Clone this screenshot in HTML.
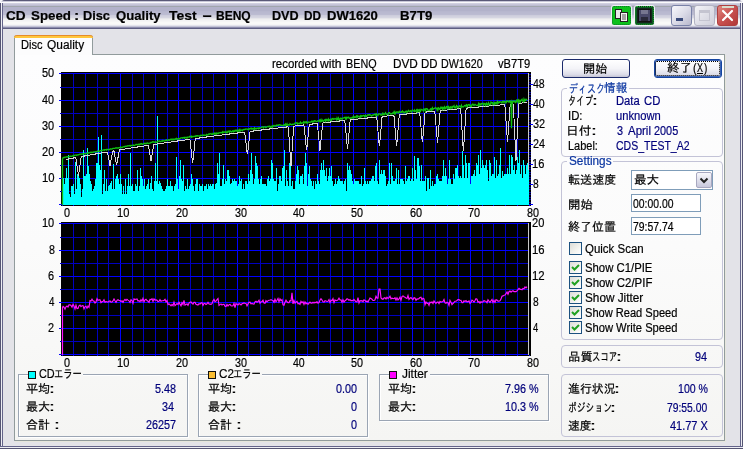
<!DOCTYPE html>
<html lang="ja">
<head>
<meta charset="utf-8">
<title>CD Speed : Disc Quality Test</title>
<style>
html,body{margin:0;padding:0;}
body{width:743px;height:449px;position:relative;overflow:hidden;background:#f4f4f8;
 font-family:"Liberation Sans","IPAGothic","Noto Sans CJK JP",sans-serif;font-size:11px;color:#000;}
.abs,.abs *{position:absolute;}
div{position:absolute;white-space:nowrap;box-sizing:border-box;}
#tx{left:0;top:0;width:743px;height:449px;will-change:transform;-webkit-text-stroke:0.2px;}
.t{line-height:14px;height:14px;font-size:11px;}
.j{font-size:12px;}
.nv{color:#00007b;}
.r{text-align:right;}
#titlebar{left:0;top:0;width:743px;height:29px;border-radius:5px 5px 0 0;background:linear-gradient(to bottom,#5a5a78 0px,#5a5a78 1px,#c8c8d8 1px,#c8c8d8 2px,#fafafc 2px,#fafafc 3px,#d0d0e0 3px,#d0d0e0 4px,#c6c6d8 4px,#c6c6d8 5px,#bcbcd2 5px,#bcbcd2 6px,#a0a6ac 6px,#a0a6ac 7px,#b2b2ca 7px,#b2b2ca 8px,#b2b2ca 8px,#b2b2ca 9px,#b2b2ca 9px,#b2b2ca 10px,#b2b2ca 10px,#b2b2ca 11px,#b7b7ce 11px,#b7b7ce 12px,#b9b9d0 12px,#b9b9d0 13px,#babad0 13px,#babad0 14px,#bcbcd2 14px,#bcbcd2 15px,#cdcddc 15px,#cdcddc 16px,#d2d2df 16px,#d2d2df 17px,#d6d6e2 17px,#d6d6e2 18px,#e6e6ea 18px,#e6e6ea 19px,#f0f0f1 19px,#f0f0f1 20px,#f3f3f3 20px,#f3f3f3 21px,#f6f6f5 21px,#f6f6f5 22px,#fafaf8 22px,#fafaf8 23px,#fafaf8 23px,#fafaf8 24px,#f6f6f6 24px,#f6f6f6 25px,#e4e4ec 25px,#e4e4ec 26px,#c4c4d6 26px,#c4c4d6 27px,#8c8cac 27px,#8c8cac 28px,#5f5f82 28px,#5f5f82 29px);}
#title{left:7px;top:7px;font-weight:bold;font-size:12px;line-height:16px;letter-spacing:1.4px;color:#000;}
.frameL{left:0;top:3px;width:3px;height:446px;background:linear-gradient(to right,#555573 0,#555573 1px,#eeeef4 1px,#eeeef4 2px,#64648a 2px,#64648a 3px);}
.frameR{left:740px;top:3px;width:3px;height:446px;background:linear-gradient(to right,#64648a 0,#64648a 1px,#eeeef4 1px,#eeeef4 2px,#555573 2px,#555573 3px);}
.frameB{left:0;top:446px;width:743px;height:3px;background:linear-gradient(to bottom,#64648a 0,#64648a 1px,#eeeef4 1px,#eeeef4 2px,#555573 2px,#555573 3px);}
#pane{left:14px;top:54px;width:711px;height:387px;box-shadow:1px 1px 0 #e6e6dc;background:linear-gradient(to bottom,#fdfdfe 0,#fbfbfb 50%,#f5f5f3 100%);border:1px solid #919b9c;}
#tab{left:14px;top:35px;width:79px;height:20px;background:#fcfcfd;border:1px solid #919b9c;border-bottom:none;border-top:none;border-radius:3px 3px 0 0;}
#tab .or{left:-1px;top:0;width:79px;height:3px;background:#ffc73c;border-radius:3px 3px 0 0;border-top:1px solid #e68b2c;}
.gb{border:1px solid #c3c3d7;border-radius:4px;}
.gt{background:#f7f7f6;}
.gbe{border:1px solid #9ba5b4;box-shadow:1px 1px 0 #fff, inset 1px 1px 0 #fff;}
.btn{border:1px solid #1b2a6b;border-radius:3px;background:linear-gradient(to bottom,#ffffff 0,#f4f4f8 50%,#dcdce8 85%,#c4c4d4 100%);text-align:center;font-size:12px;line-height:17px;height:19px;}
.edit{border:1px solid #7f9db9;background:#fff;font-size:11px;line-height:15px;padding-left:2px;}
.cb{width:13px;height:13px;border:1px solid #1c5180;background:linear-gradient(135deg,#dcdcd7 0,#f3f3ef 60%,#ffffff 100%);}
.sq{width:8px;height:8px;border:1px solid #111;}
</style>
</head>
<body>
<div style="left:0;top:8px;width:743px;height:441px;background:#e3e3e8;"></div>
<div id="titlebar"></div>
<div class="frameL"></div><div class="frameR"></div><div class="frameB"></div>
<div style="left:611px;top:5px;width:21px;height:21px;background:#f0f0f6;border-radius:3px;"></div>
<div style="left:612px;top:6px;width:19px;height:19px;background:#0cc01c;border:1px dotted #0a7a2a;border-radius:2px;"></div>
<svg style="position:absolute;left:612px;top:6px" width="19" height="19" viewBox="0 0 19 19"><rect x="3.5" y="3.5" width="6" height="9" fill="#e8e8e8" stroke="#222" stroke-width="1"/><rect x="8.5" y="6.5" width="7" height="9" fill="#f4f4f4" stroke="#222" stroke-width="1"/><path d="M10 9h4M10 11h4M10 13h4" stroke="#555" stroke-width="1"/></svg>
<div style="left:634px;top:5px;width:21px;height:21px;background:#f0f0f6;border-radius:3px;"></div>
<div style="left:635px;top:6px;width:19px;height:19px;background:#14241e;border:1px dotted #18c830;border-radius:2px;box-shadow:inset 0 0 0 1px #0c5c20;"></div>
<svg style="position:absolute;left:635px;top:6px" width="19" height="19" viewBox="0 0 19 19"><rect x="3.5" y="3.5" width="12" height="12" fill="#4a4a6a" stroke="#111" stroke-width="1"/><rect x="6" y="4" width="7" height="4" fill="#777790"/><rect x="6" y="11" width="7" height="4" fill="#2a2a3a"/></svg>
<div style="left:671px;top:5px;width:21px;height:21px;border:1px solid #7a82a8;border-radius:3px;background:linear-gradient(135deg,#f8f8fc 0,#dcdce8 50%,#b8b8cc 100%);"></div>
<div style="left:676px;top:18px;width:7px;height:3px;background:#3a4a7a;"></div>
<div style="left:694px;top:5px;width:21px;height:21px;border:1px solid #b4b4c4;border-radius:3px;background:linear-gradient(135deg,#f4f4f8 0,#e0e0e8 50%,#d0d0dc 100%);"></div>
<div style="left:699px;top:10px;width:11px;height:11px;border:1px solid #c4c4d0;border-top:3px solid #c4c4d0;"></div>
<div style="left:717px;top:5px;width:21px;height:21px;border:1px solid #b04040;border-radius:3px;background:linear-gradient(135deg,#e08a80 0,#c85050 50%,#b03838 100%);"></div>
<svg style="position:absolute;left:717px;top:5px" width="21" height="21" viewBox="0 0 21 21"><path d="M6 6L15 15M15 6L6 15" stroke="#fff" stroke-width="2.2" stroke-linecap="round"/></svg>
<div style="left:722px;top:6px;width:12px;height:2px;background:#d8dccc;"></div>

<div id="pane"></div>
<div id="tab"><div class="or"></div></div>
<svg width="743" height="449" viewBox="0 0 743 449" style="position:absolute;left:0;top:0">
<rect x="61" y="72" width="470" height="134" fill="#000"/>
<rect x="73" y="73" width="1" height="132" fill="#0000c0"/>
<rect x="85" y="73" width="1" height="132" fill="#0000c0"/>
<rect x="97" y="73" width="1" height="132" fill="#0000c0"/>
<rect x="108" y="73" width="1" height="132" fill="#0000c0"/>
<rect x="120" y="73" width="1" height="132" fill="#0000ff"/>
<rect x="132" y="73" width="1" height="132" fill="#0000c0"/>
<rect x="143" y="73" width="1" height="132" fill="#0000c0"/>
<rect x="155" y="73" width="1" height="132" fill="#0000c0"/>
<rect x="167" y="73" width="1" height="132" fill="#0000c0"/>
<rect x="178" y="73" width="1" height="132" fill="#0000ff"/>
<rect x="190" y="73" width="1" height="132" fill="#0000c0"/>
<rect x="202" y="73" width="1" height="132" fill="#0000c0"/>
<rect x="213" y="73" width="1" height="132" fill="#0000c0"/>
<rect x="225" y="73" width="1" height="132" fill="#0000c0"/>
<rect x="237" y="73" width="1" height="132" fill="#0000ff"/>
<rect x="248" y="73" width="1" height="132" fill="#0000c0"/>
<rect x="260" y="73" width="1" height="132" fill="#0000c0"/>
<rect x="272" y="73" width="1" height="132" fill="#0000c0"/>
<rect x="283" y="73" width="1" height="132" fill="#0000c0"/>
<rect x="295" y="73" width="1" height="132" fill="#0000ff"/>
<rect x="307" y="73" width="1" height="132" fill="#0000c0"/>
<rect x="318" y="73" width="1" height="132" fill="#0000c0"/>
<rect x="330" y="73" width="1" height="132" fill="#0000c0"/>
<rect x="342" y="73" width="1" height="132" fill="#0000c0"/>
<rect x="353" y="73" width="1" height="132" fill="#0000ff"/>
<rect x="365" y="73" width="1" height="132" fill="#0000c0"/>
<rect x="377" y="73" width="1" height="132" fill="#0000c0"/>
<rect x="388" y="73" width="1" height="132" fill="#0000c0"/>
<rect x="400" y="73" width="1" height="132" fill="#0000c0"/>
<rect x="412" y="73" width="1" height="132" fill="#0000ff"/>
<rect x="423" y="73" width="1" height="132" fill="#0000c0"/>
<rect x="435" y="73" width="1" height="132" fill="#0000c0"/>
<rect x="447" y="73" width="1" height="132" fill="#0000c0"/>
<rect x="458" y="73" width="1" height="132" fill="#0000c0"/>
<rect x="470" y="73" width="1" height="132" fill="#0000ff"/>
<rect x="482" y="73" width="1" height="132" fill="#0000c0"/>
<rect x="493" y="73" width="1" height="132" fill="#0000c0"/>
<rect x="505" y="73" width="1" height="132" fill="#0000c0"/>
<rect x="517" y="73" width="1" height="132" fill="#0000c0"/>
<rect x="59" y="204" width="469" height="1" fill="#0000ff"/>
<rect x="60" y="191" width="468" height="1" fill="#0000c0"/>
<rect x="59" y="178" width="469" height="1" fill="#0000ff"/>
<rect x="60" y="165" width="468" height="1" fill="#0000c0"/>
<rect x="59" y="152" width="469" height="1" fill="#0000ff"/>
<rect x="60" y="139" width="468" height="1" fill="#0000c0"/>
<rect x="59" y="126" width="469" height="1" fill="#0000ff"/>
<rect x="60" y="113" width="468" height="1" fill="#0000c0"/>
<rect x="59" y="100" width="469" height="1" fill="#0000ff"/>
<rect x="60" y="87" width="468" height="1" fill="#0000c0"/>
<rect x="59" y="73" width="469" height="1" fill="#0000ff"/>
<rect x="528" y="73" width="1" height="132" fill="#c8c8c8"/>
<path fill="#00ffff" shape-rendering="crispEdges" d="M62 205V184h1V178h1V184h1V178h1V168h1V178h1V155h1V194h1V197h1V186h1V186h1V184h1V194h1V162h1V189h1V174h1V176h1V178h1V184h1V197h1V189h1V150h1V176h1V176h1V174h1V148h1V166h1V174h1V181h1V184h1V191h1V189h1V186h1V179h1V163h1V163h1V137h1V165h1V170h1V135h1V194h1V184h1V170h1V191h1V179h1V191h1V186h1V185h1V183h1V181h1V189h1V164h1V189h1V179h1V176h1V174h1V179h1V184h1V174h1V184h1V194h1V186h1V194h1V179h1V194h1V186h1V174h1V186h1V153h1V186h1V184h1V191h1V191h1V184h1V186h1V170h1V191h1V186h1V168h1V176h1V179h1V186h1V179h1V189h1V186h1V184h1V179h1V189h1V183h1V176h1V189h1V191h1V181h1V163h1V181h1V116h1V184h1V181h1V183h1V186h1V189h1V191h1V191h1V189h1V186h1V179h1V186h1V186h1V181h1V186h1V186h1V191h1V186h1V184h1V157h1V179h1V189h1V176h1V160h1V179h1V181h1V165h1V191h1V186h1V189h1V179h1V189h1V186h1V184h1V174h1V179h1V186h1V191h1V184h1V179h1V179h1V191h1V184h1V186h1V186h1V184h1V191h1V186h1V186h1V184h1V189h1V184h1V186h1V184h1V186h1V184h1V184h1V189h1V184h1V183h1V163h1V174h1V153h1V186h1V186h1V179h1V165h1V184h1V179h1V181h1V170h1V170h1V176h1V184h1V183h1V179h1V181h1V179h1V181h1V181h1V186h1V184h1V176h1V181h1V179h1V189h1V184h1V189h1V181h1V181h1V184h1V174h1V181h1V170h1V153h1V174h1V184h1V179h1V156h1V163h1V166h1V179h1V184h1V179h1V176h1V184h1V184h1V184h1V184h1V186h1V179h1V176h1V181h1V179h1V160h1V163h1V179h1V181h1V181h1V168h1V191h1V184h1V176h1V176h1V181h1V168h1V166h1V150h1V186h1V170h1V181h1V186h1V163h1V163h1V186h1V181h1V189h1V189h1V181h1V174h1V166h1V170h1V184h1V176h1V176h1V174h1V184h1V166h1V153h1V163h1V186h1V174h1V166h1V179h1V181h1V186h1V181h1V189h1V181h1V184h1V174h1V181h1V184h1V170h1V163h1V170h1V160h1V170h1V176h1V168h1V181h1V176h1V168h1V176h1V166h1V181h1V186h1V184h1V179h1V184h1V181h1V176h1V179h1V181h1V181h1V181h1V184h1V181h1V179h1V191h1V163h1V170h1V166h1V170h1V174h1V181h1V184h1V179h1V181h1V181h1V181h1V181h1V184h1V184h1V176h1V186h1V184h1V168h1V181h1V184h1V181h1V184h1V181h1V181h1V179h1V176h1V176h1V181h1V166h1V163h1V181h1V184h1V160h1V174h1V170h1V174h1V170h1V170h1V176h1V186h1V184h1V181h1V163h1V184h1V163h1V176h1V181h1V181h1V179h1V168h1V184h1V170h1V184h1V179h1V179h1V179h1V181h1V184h1V166h1V181h1V179h1V176h1V176h1V181h1V179h1V168h1V181h1V156h1V170h1V179h1V158h1V158h1V166h1V181h1V165h1V181h1V181h1V181h1V176h1V191h1V178h1V178h1V189h1V170h1V186h1V181h1V186h1V184h1V184h1V176h1V174h1V179h1V181h1V181h1V181h1V176h1V160h1V176h1V168h1V176h1V184h1V179h1V160h1V179h1V184h1V184h1V174h1V179h1V168h1V168h1V165h1V176h1V178h1V176h1V178h1V151h1V165h1V178h1V155h1V163h1V178h1V163h1V163h1V184h1V176h1V176h1V174h1V170h1V176h1V163h1V165h1V155h1V174h1V150h1V168h1V160h1V165h1V168h1V165h1V160h1V170h1V181h1V160h1V163h1V176h1V174h1V174h1V157h1V178h1V160h1V176h1V174h1V165h1V148h1V178h1V171h1V176h1V174h1V174h1V174h1V168h1V174h1V155h1V174h1V155h1V157h1V170h1V165h1V174h1V170h1V157h1V163h1V150h1V174h1V165h1V178h1V160h1V165h1V174h1V165h1V163h1V170h1V205z"/>
<polyline shape-rendering="crispEdges" fill="none" stroke="#d8d8d8" stroke-width="1" points="66.0,159.5 66.5,159.4 67.0,159.3 67.5,159.2 68.0,159.1 68.5,159.0 69.0,158.9 69.5,158.8 70.0,158.7 70.5,158.6 71.0,158.5 71.5,158.4 72.0,158.3 72.5,158.2 73.0,158.1 73.5,158.0 74.0,157.9 74.5,157.8 75.0,157.7 75.5,157.7 76.0,158.9 76.5,162.2 77.0,165.5 77.5,168.9 78.0,172.3 78.5,175.7 79.0,172.2 79.5,168.7 80.0,165.2 80.5,161.6 81.0,158.0 81.5,156.5 82.0,156.4 82.5,156.3 83.0,156.2 83.5,156.2 84.0,156.1 84.5,156.0 85.0,155.9 85.5,155.8 86.0,155.7 86.5,155.6 87.0,155.5 87.5,155.4 88.0,155.3 88.5,155.2 89.0,155.1 89.5,155.1 90.0,155.0 90.5,154.9 91.0,154.8 91.5,154.7 92.0,154.6 92.5,154.5 93.0,154.4 93.5,154.3 94.0,154.2 94.5,154.2 95.0,154.1 95.5,154.0 96.0,153.9 96.5,153.8 97.0,153.7 97.5,153.6 98.0,153.5 98.5,153.4 99.0,153.4 99.5,153.3 100.0,153.2 100.5,153.1 101.0,153.0 101.5,152.9 102.0,152.8 102.5,152.8 103.0,152.7 103.5,152.6 104.0,152.5 104.5,152.4 105.0,152.3 105.5,152.2 106.0,152.1 106.5,152.1 107.0,152.0 107.5,152.9 108.0,155.4 108.5,157.9 109.0,160.4 109.5,163.0 110.0,165.6 110.5,163.0 111.0,160.3 111.5,157.6 112.0,154.9 112.5,152.1 113.0,151.0 113.5,150.9 114.0,151.3 114.5,154.0 115.0,156.7 115.5,159.5 116.0,162.2 116.5,165.0 117.0,163.3 117.5,160.5 118.0,157.6 118.5,154.7 119.0,151.7 119.5,149.9 120.0,149.8 120.5,149.7 121.0,149.6 121.5,149.6 122.0,149.5 122.5,149.4 123.0,149.3 123.5,149.2 124.0,149.1 124.5,149.1 125.0,149.0 125.5,148.9 126.0,148.8 126.5,148.7 127.0,148.7 127.5,148.6 128.0,148.5 128.5,148.4 129.0,148.3 129.5,148.3 130.0,148.2 130.5,148.1 131.0,148.0 131.5,147.9 132.0,147.9 132.5,147.8 133.0,147.7 133.5,147.6 134.0,147.5 134.5,147.5 135.0,147.4 135.5,147.3 136.0,147.2 136.5,147.1 137.0,147.1 137.5,147.0 138.0,146.9 138.5,146.8 139.0,146.8 139.5,146.7 140.0,146.6 140.5,146.5 141.0,146.4 141.5,146.4 142.0,146.3 142.5,146.2 143.0,146.1 143.5,146.1 144.0,146.0 144.5,145.9 145.0,145.8 145.5,145.7 146.0,145.7 146.5,145.6 147.0,145.5 147.5,145.4 148.0,145.4 148.5,146.5 149.0,149.4 149.5,152.3 150.0,155.2 150.5,158.2 151.0,161.2 151.5,158.2 152.0,155.1 152.5,152.0 153.0,148.9 153.5,145.8 154.0,144.5 154.5,144.4 155.0,144.3 155.5,144.2 156.0,144.2 156.5,144.1 157.0,144.0 157.5,143.9 158.0,143.9 158.5,143.8 159.0,143.7 159.5,143.6 160.0,143.6 160.5,143.5 161.0,143.4 161.5,143.3 162.0,143.3 162.5,143.2 163.0,143.1 163.5,143.0 164.0,143.0 164.5,142.9 165.0,142.8 165.5,142.8 166.0,142.7 166.5,142.6 167.0,142.5 167.5,142.5 168.0,142.4 168.5,142.3 169.0,142.2 169.5,142.2 170.0,142.1 170.5,142.0 171.0,142.0 171.5,141.9 172.0,141.8 172.5,141.7 173.0,141.7 173.5,141.6 174.0,141.5 174.5,141.4 175.0,141.4 175.5,141.3 176.0,141.2 176.5,141.2 177.0,141.1 177.5,141.0 178.0,140.9 178.5,140.9 179.0,140.8 179.5,140.7 180.0,140.7 180.5,140.6 181.0,140.5 181.5,140.5 182.0,140.4 182.5,140.3 183.0,140.2 183.5,140.2 184.0,140.1 184.5,140.0 185.0,140.0 185.5,139.9 186.0,139.8 186.5,139.8 187.0,139.7 187.5,139.6 188.0,139.5 188.5,139.5 189.0,139.4 189.5,139.3 190.0,140.2 190.5,144.7 191.0,149.2 191.5,153.7 192.0,158.3 192.5,162.9 193.0,160.1 193.5,155.5 194.0,150.8 194.5,146.1 195.0,141.4 195.5,138.5 196.0,138.4 196.5,138.4 197.0,138.3 197.5,138.2 198.0,138.2 198.5,138.1 199.0,138.0 199.5,138.0 200.0,137.9 200.5,137.8 201.0,137.8 201.5,137.7 202.0,137.6 202.5,137.5 203.0,137.5 203.5,137.4 204.0,137.3 204.5,137.3 205.0,137.2 205.5,137.1 206.0,137.1 206.5,137.0 207.0,136.9 207.5,136.9 208.0,136.8 208.5,136.7 209.0,136.7 209.5,136.6 210.0,136.5 210.5,136.5 211.0,136.4 211.5,136.3 212.0,136.3 212.5,136.2 213.0,136.1 213.5,136.1 214.0,136.0 214.5,135.9 215.0,135.9 215.5,135.8 216.0,135.7 216.5,135.7 217.0,135.6 217.5,135.5 218.0,135.5 218.5,135.4 219.0,135.4 219.5,135.3 220.0,135.2 220.5,135.2 221.0,135.1 221.5,135.0 222.0,135.0 222.5,134.9 223.0,134.8 223.5,134.8 224.0,134.7 224.5,134.6 225.0,134.6 225.5,134.5 226.0,134.4 226.5,134.4 227.0,134.3 227.5,134.2 228.0,134.2 228.5,134.1 229.0,134.1 229.5,134.0 230.0,133.9 230.5,133.9 231.0,133.8 231.5,133.7 232.0,133.7 232.5,133.6 233.0,133.5 233.5,133.5 234.0,133.4 234.5,133.3 235.0,133.3 235.5,133.2 236.0,133.2 236.5,133.1 237.0,133.0 237.5,133.0 238.0,132.9 238.5,132.8 239.0,132.8 239.5,132.7 240.0,132.6 240.5,132.6 241.0,132.5 241.5,132.5 242.0,132.4 242.5,132.3 243.0,132.3 243.5,132.2 244.0,132.1 244.5,132.1 245.0,134.6 245.5,138.8 246.0,143.1 246.5,147.4 247.0,151.7 247.5,154.3 248.0,150.0 248.5,145.6 249.0,141.2 249.5,136.7 250.0,132.3 250.5,131.3 251.0,131.3 251.5,131.2 252.0,131.1 252.5,131.1 253.0,131.0 253.5,131.0 254.0,130.9 254.5,130.8 255.0,130.8 255.5,130.7 256.0,130.7 256.5,130.6 257.0,130.5 257.5,130.5 258.0,130.4 258.5,130.3 259.0,130.3 259.5,130.2 260.0,130.2 260.5,130.1 261.0,130.0 261.5,130.0 262.0,129.9 262.5,129.9 263.0,129.8 263.5,129.7 264.0,129.7 264.5,129.6 265.0,129.6 265.5,129.5 266.0,129.4 266.5,129.4 267.0,129.3 267.5,129.3 268.0,129.2 268.5,129.1 269.0,129.1 269.5,129.0 270.0,128.9 270.5,128.9 271.0,128.8 271.5,128.8 272.0,128.7 272.5,128.6 273.0,128.6 273.5,128.5 274.0,128.5 274.5,128.4 275.0,128.3 275.5,128.3 276.0,128.2 276.5,128.2 277.0,128.1 277.5,128.1 278.0,128.0 278.5,127.9 279.0,127.9 279.5,127.8 280.0,127.8 280.5,127.7 281.0,127.6 281.5,127.6 282.0,127.5 282.5,127.5 283.0,127.4 283.5,127.3 284.0,127.3 284.5,127.2 285.0,127.2 285.5,127.1 286.0,127.0 286.5,127.0 287.0,126.9 287.5,126.9 288.0,126.8 288.5,129.7 289.0,137.0 289.5,144.3 290.0,151.7 290.5,159.0 291.0,166.4 291.5,159.0 292.0,151.6 292.5,144.1 293.0,136.6 293.5,129.2 294.0,126.1 294.5,126.1 295.0,126.0 295.5,125.9 296.0,125.9 296.5,125.8 297.0,125.8 297.5,125.7 298.0,125.6 298.5,125.6 299.0,125.5 299.5,125.5 300.0,125.4 300.5,125.4 301.0,125.3 301.5,125.2 302.0,125.2 302.5,125.1 303.0,125.1 303.5,125.0 304.0,125.9 304.5,130.6 305.0,135.3 305.5,140.0 306.0,144.8 306.5,149.5 307.0,146.7 307.5,141.9 308.0,137.0 308.5,132.2 309.0,127.3 309.5,124.3 310.0,124.3 310.5,124.2 311.0,124.2 311.5,124.1 312.0,124.0 312.5,124.0 313.0,123.9 313.5,123.9 314.0,123.8 314.5,123.8 315.0,123.7 315.5,123.7 316.0,123.6 316.5,123.5 317.0,123.5 317.5,125.4 318.0,130.4 318.5,135.4 319.0,140.4 319.5,145.4 320.0,150.5 320.5,145.4 321.0,140.3 321.5,135.2 322.0,130.1 322.5,124.9 323.0,122.8 323.5,122.8 324.0,122.7 324.5,122.6 325.0,122.6 325.5,122.5 326.0,122.5 326.5,122.4 327.0,122.4 327.5,122.3 328.0,122.3 328.5,122.2 329.0,122.1 329.5,122.1 330.0,122.0 330.5,122.0 331.0,121.9 331.5,121.9 332.0,121.8 332.5,121.8 333.0,121.7 333.5,121.6 334.0,121.6 334.5,121.5 335.0,121.5 335.5,121.4 336.0,121.4 336.5,121.3 337.0,121.3 337.5,121.2 338.0,121.2 338.5,121.1 339.0,121.0 339.5,121.0 340.0,120.9 340.5,120.9 341.0,120.8 341.5,120.8 342.0,120.7 342.5,120.7 343.0,120.6 343.5,120.6 344.0,120.5 344.5,120.4 345.0,122.5 345.5,127.9 346.0,133.2 346.5,138.6 347.0,144.0 347.5,149.4 348.0,144.0 348.5,138.5 349.0,133.0 349.5,127.6 350.0,122.0 350.5,119.8 351.0,119.7 351.5,119.7 352.0,119.6 352.5,119.6 353.0,119.5 353.5,119.5 354.0,119.4 354.5,119.4 355.0,119.3 355.5,119.3 356.0,119.2 356.5,119.2 357.0,119.1 357.5,119.0 358.0,119.0 358.5,118.9 359.0,118.9 359.5,118.8 360.0,118.8 360.5,118.7 361.0,118.7 361.5,118.6 362.0,118.6 362.5,118.5 363.0,118.5 363.5,118.4 364.0,118.4 364.5,118.3 365.0,118.2 365.5,118.2 366.0,118.1 366.5,118.1 367.0,118.0 367.5,118.0 368.0,117.9 368.5,117.9 369.0,117.8 369.5,117.8 370.0,117.7 370.5,117.7 371.0,117.6 371.5,117.6 372.0,117.5 372.5,117.5 373.0,117.4 373.5,117.4 374.0,117.3 374.5,117.2 375.0,117.2 375.5,117.1 376.0,117.1 376.5,117.0 377.0,120.3 377.5,125.8 378.0,131.4 378.5,136.9 379.0,142.5 379.5,145.9 380.0,140.3 380.5,134.6 381.0,129.0 381.5,123.3 382.0,117.6 382.5,116.4 383.0,116.4 383.5,116.3 384.0,116.3 384.5,116.2 385.0,116.2 385.5,116.1 386.0,116.1 386.5,116.0 387.0,116.0 387.5,115.9 388.0,115.8 388.5,115.8 389.0,115.7 389.5,115.7 390.0,115.6 390.5,115.6 391.0,115.5 391.5,115.5 392.0,115.4 392.5,115.4 393.0,115.3 393.5,115.3 394.0,116.4 394.5,122.3 395.0,128.1 395.5,134.0 396.0,139.9 396.5,145.8 397.0,142.2 397.5,136.3 398.0,130.3 398.5,124.3 399.0,118.3 399.5,114.7 400.0,114.6 400.5,114.6 401.0,114.5 401.5,114.5 402.0,114.4 402.5,114.4 403.0,114.3 403.5,114.3 404.0,114.2 404.5,114.2 405.0,114.1 405.5,114.1 406.0,114.0 406.5,114.0 407.0,113.9 407.5,113.9 408.0,113.8 408.5,113.8 409.0,113.7 409.5,113.7 410.0,113.6 410.5,113.6 411.0,113.5 411.5,113.5 412.0,113.4 412.5,113.4 413.0,113.3 413.5,113.3 414.0,113.2 414.5,113.2 415.0,113.1 415.5,113.1 416.0,113.0 416.5,113.0 417.0,112.9 417.5,112.9 418.0,112.8 418.5,112.8 419.0,112.7 419.5,112.7 420.0,116.0 420.5,121.7 421.0,127.4 421.5,133.1 422.0,138.8 422.5,142.3 423.0,136.5 423.5,130.7 424.0,124.9 424.5,119.1 425.0,113.3 425.5,112.1 426.0,112.0 426.5,112.0 427.0,111.9 427.5,111.9 428.0,111.8 428.5,111.8 429.0,111.7 429.5,111.7 430.0,111.6 430.5,111.6 431.0,111.5 431.5,111.5 432.0,111.4 432.5,111.4 433.0,111.3 433.5,111.3 434.0,111.2 434.5,111.2 435.0,113.5 435.5,119.5 436.0,125.4 436.5,131.4 437.0,137.4 437.5,143.4 438.0,137.4 438.5,131.3 439.0,125.3 439.5,119.2 440.0,113.1 440.5,110.6 441.0,110.5 441.5,110.5 442.0,110.4 442.5,110.4 443.0,110.3 443.5,110.3 444.0,110.2 444.5,110.2 445.0,110.2 445.5,110.1 446.0,110.1 446.5,110.0 447.0,110.0 447.5,109.9 448.0,109.9 448.5,109.8 449.0,109.8 449.5,109.7 450.0,109.7 450.5,109.6 451.0,109.6 451.5,109.5 452.0,109.5 452.5,109.4 453.0,109.4 453.5,109.3 454.0,109.3 454.5,109.2 455.0,109.2 455.5,109.1 456.0,109.1 456.5,109.0 457.0,109.0 457.5,108.9 458.0,108.9 458.5,108.9 459.0,108.8 459.5,108.8 460.0,108.7 460.5,108.7 461.0,113.5 461.5,121.6 462.0,129.6 462.5,137.8 463.0,145.9 463.5,150.8 464.0,142.6 464.5,134.4 465.0,126.2 465.5,118.0 466.0,109.8 466.5,108.1 467.0,108.0 467.5,108.0 468.0,107.9 468.5,107.9 469.0,107.9 469.5,107.8 470.0,107.8 470.5,107.7 471.0,107.7 471.5,107.6 472.0,107.6 472.5,107.5 473.0,107.5 473.5,107.4 474.0,107.4 474.5,107.3 475.0,107.3 475.5,107.2 476.0,107.2 476.5,107.1 477.0,107.1 477.5,107.1 478.0,107.0 478.5,107.0 479.0,106.9 479.5,106.9 480.0,106.8 480.5,106.8 481.0,106.7 481.5,106.7 482.0,106.6 482.5,106.6 483.0,106.5 483.5,106.5 484.0,106.4 484.5,106.4 485.0,106.3 485.5,106.3 486.0,106.3 486.5,106.2 487.0,106.2 487.5,106.1 488.0,106.1 488.5,106.0 489.0,106.0 489.5,105.9 490.0,105.9 490.5,105.8 491.0,105.8 491.5,105.7 492.0,105.7 492.5,105.7 493.0,105.6 493.5,105.6 494.0,105.5 494.5,105.5 495.0,105.4 495.5,105.4 496.0,105.3 496.5,105.3 497.0,105.2 497.5,105.2 498.0,105.1 498.5,105.1 499.0,105.1 499.5,105.0 500.0,105.0 500.5,104.9 501.0,104.9 501.5,104.8 502.0,104.8 502.5,104.7 503.0,104.7 503.5,104.6 504.0,104.6 504.5,104.5 505.0,107.3 505.5,114.3 506.0,121.2 506.5,128.2 507.0,135.3 507.5,142.3 508.0,135.2 508.5,128.2 509.0,121.1 509.5,114.0 510.0,106.9 510.5,104.0 511.0,104.0 511.5,103.9 512.0,103.9 512.5,103.8 513.0,103.8 513.5,107.9 514.0,118.4 514.5,129.0 515.0,139.5 515.5,150.0 516.0,160.6 516.5,150.0 517.0,139.4 517.5,128.8 518.0,118.2 518.5,107.5 519.0,103.2 519.5,103.2 520.0,103.1 520.5,103.1 521.0,103.0 521.5,103.0 522.0,103.0 522.5,102.9 523.0,102.9 523.5,102.8 524.0,102.8 524.5,102.7 525.0,102.7 525.5,102.6 526.0,102.6 526.5,102.5 527.0,102.5"/>
<polyline fill="none" stroke="#10c010" stroke-width="1.3" points="62.5,205.0 62.5,159.0 63.0,157.7 63.5,157.5 64.0,157.7 64.5,157.2 65.0,157.4 65.5,157.2 66.0,156.9 66.5,157.1 67.0,156.7 67.5,156.9 68.0,156.5 68.5,156.4 69.0,156.6 69.5,156.7 70.0,156.2 70.5,156.1 71.0,156.3 71.5,156.4 72.0,156.1 72.5,155.9 73.0,156.1 73.5,155.4 74.0,155.9 74.5,155.4 75.0,155.2 75.5,155.1 76.0,155.1 76.5,155.4 77.0,154.9 77.5,155.0 78.0,155.0 78.5,154.7 79.0,154.7 79.5,154.3 80.0,154.2 80.5,154.2 81.0,154.4 81.5,154.2 82.0,154.0 82.5,154.1 83.0,153.9 83.5,153.7 84.0,154.0 84.5,153.8 85.0,153.4 85.5,153.5 86.0,153.4 86.5,153.6 87.0,153.4 87.5,153.0 88.0,153.4 88.5,152.7 89.0,152.8 89.5,152.9 90.0,152.4 90.5,152.6 91.0,152.1 91.5,152.5 92.0,152.5 92.5,152.3 93.0,152.4 93.5,151.9 94.0,152.1 94.5,151.9 95.0,151.8 95.5,151.6 96.0,151.8 96.5,151.8 97.0,151.4 97.5,151.5 98.0,150.9 98.5,151.3 99.0,151.2 99.5,151.4 100.0,151.1 100.5,150.6 101.0,150.6 101.5,150.8 102.0,150.2 102.5,150.4 103.0,150.1 103.5,150.0 104.0,149.8 104.5,150.3 105.0,149.7 105.5,149.7 106.0,149.8 106.5,150.1 107.0,149.3 107.5,149.5 108.0,149.5 108.5,149.7 109.0,149.6 109.5,149.6 110.0,149.0 110.5,149.0 111.0,148.9 111.5,149.2 112.0,149.2 112.5,148.5 113.0,148.4 113.5,148.4 114.0,148.3 114.5,148.4 115.0,148.4 115.5,148.0 116.0,147.7 116.5,148.0 117.0,147.9 117.5,148.0 118.0,148.2 118.5,147.9 119.0,147.7 119.5,147.7 120.0,147.7 120.5,147.0 121.0,147.7 121.5,147.5 122.0,147.5 122.5,147.4 123.0,146.9 123.5,146.8 124.0,146.5 124.5,146.9 125.0,146.3 125.5,146.2 126.0,146.3 126.5,146.1 127.0,146.2 127.5,145.9 128.0,145.7 128.5,145.8 129.0,145.7 129.5,145.8 130.0,145.4 130.5,146.1 131.0,145.8 131.5,145.3 132.0,145.3 132.5,145.3 133.0,145.3 133.5,145.0 134.0,145.6 134.5,145.6 135.0,145.1 135.5,145.0 136.0,144.5 136.5,144.5 137.0,144.6 137.5,144.5 138.0,144.9 138.5,144.2 139.0,144.0 139.5,144.8 140.0,144.3 140.5,143.9 141.0,144.2 141.5,143.6 142.0,144.0 142.5,144.4 143.0,144.2 143.5,143.9 144.0,143.4 144.5,143.5 145.0,143.2 145.5,143.7 146.0,143.4 146.5,143.6 147.0,143.0 147.5,142.9 148.0,143.4 148.5,143.5 149.0,143.3 149.5,143.1 150.0,143.1 150.5,142.9 151.0,142.3 151.5,142.6 152.0,142.3 152.5,141.9 153.0,141.8 153.5,142.0 154.0,141.9 154.5,142.3 155.0,142.5 155.5,141.9 156.0,142.3 156.5,142.3 157.0,142.2 157.5,141.5 158.0,141.3 158.5,141.2 159.0,141.1 159.5,141.0 160.0,141.4 160.5,141.6 161.0,141.5 161.5,141.0 162.0,141.1 162.5,141.2 163.0,140.4 163.5,140.9 164.0,141.1 164.5,140.9 165.0,140.8 165.5,140.4 166.0,140.0 166.5,140.6 167.0,140.0 167.5,140.5 168.0,140.6 168.5,139.9 169.0,139.8 169.5,140.4 170.0,140.0 170.5,139.4 171.0,139.2 171.5,139.2 172.0,140.0 172.5,139.8 173.0,139.0 173.5,139.7 174.0,139.8 174.5,139.3 175.0,138.9 175.5,139.1 176.0,138.5 176.5,138.3 177.0,139.3 177.5,138.9 178.0,138.7 178.5,139.1 179.0,138.4 179.5,138.9 180.0,138.7 180.5,138.0 181.0,137.9 181.5,137.9 182.0,137.8 182.5,138.1 183.0,137.7 183.5,137.8 184.0,137.4 184.5,138.2 185.0,137.5 185.5,137.5 186.0,137.6 186.5,137.9 187.0,137.3 187.5,137.8 188.0,137.2 188.5,137.2 189.0,137.1 189.5,136.5 190.0,136.9 190.5,136.5 191.0,136.2 191.5,137.1 192.0,136.3 192.5,136.6 193.0,136.8 193.5,136.5 194.0,136.2 194.5,136.4 195.0,136.3 195.5,136.6 196.0,135.7 196.5,136.1 197.0,135.7 197.5,135.7 198.0,136.2 198.5,135.8 199.0,135.8 199.5,136.0 200.0,136.1 200.5,135.4 201.0,135.6 201.5,135.4 202.0,135.3 202.5,135.5 203.0,135.1 203.5,135.2 204.0,135.0 204.5,135.5 205.0,135.2 205.5,135.3 206.0,135.3 206.5,134.4 207.0,134.7 207.5,135.1 208.0,134.9 208.5,134.0 209.0,133.9 209.5,134.2 210.0,133.7 210.5,133.8 211.0,133.6 211.5,134.3 212.0,134.3 212.5,134.4 213.0,133.4 213.5,134.1 214.0,133.9 214.5,133.2 215.0,134.1 215.5,134.1 216.0,133.1 216.5,134.0 217.0,133.2 217.5,133.2 218.0,133.8 218.5,133.6 219.0,132.6 219.5,132.9 220.0,132.9 220.5,132.6 221.0,132.4 221.5,132.5 222.0,133.0 222.5,131.9 223.0,132.6 223.5,132.4 224.0,131.7 224.5,132.1 225.0,132.4 225.5,132.2 226.0,131.5 226.5,132.7 227.0,132.4 227.5,132.6 228.0,131.3 228.5,131.5 229.0,131.1 229.5,132.1 230.0,131.3 230.5,131.0 231.0,131.4 231.5,132.0 232.0,131.8 232.5,131.0 233.0,130.7 233.5,131.8 234.0,131.2 234.5,131.3 235.0,130.4 235.5,130.3 236.0,131.1 236.5,130.7 237.0,130.1 237.5,131.3 238.0,130.8 238.5,131.0 239.0,129.9 239.5,130.9 240.0,129.7 240.5,130.8 241.0,130.2 241.5,129.9 242.0,130.2 242.5,130.7 243.0,129.6 243.5,129.4 244.0,129.9 244.5,129.4 245.0,129.1 245.5,129.2 246.0,128.9 246.5,129.1 247.0,129.2 247.5,129.1 248.0,129.7 248.5,129.0 249.0,129.2 249.5,128.7 250.0,128.9 250.5,128.3 251.0,128.6 251.5,128.2 252.0,129.2 252.5,128.9 253.0,128.3 253.5,128.6 254.0,129.3 254.5,127.9 255.0,129.0 255.5,128.3 256.0,128.3 256.5,128.8 257.0,128.1 257.5,128.2 258.0,128.4 258.5,128.8 259.0,127.7 259.5,128.4 260.0,128.2 260.5,128.0 261.0,127.6 261.5,127.4 262.0,126.9 262.5,127.0 263.0,126.8 263.5,127.8 264.0,127.0 264.5,126.8 265.0,126.6 265.5,127.7 266.0,127.7 266.5,127.3 267.0,126.7 267.5,126.5 268.0,126.6 268.5,126.8 269.0,126.2 269.5,126.6 270.0,126.3 270.5,127.3 271.0,127.3 271.5,126.5 272.0,126.0 272.5,127.1 273.0,126.0 273.5,126.0 274.0,125.4 274.5,125.9 275.0,126.0 275.5,126.0 276.0,125.4 276.5,125.9 277.0,125.0 277.5,125.4 278.0,125.0 278.5,125.5 279.0,124.8 279.5,124.7 280.0,125.1 280.5,125.0 281.0,125.5 281.5,125.3 282.0,125.6 282.5,125.4 283.0,125.5 283.5,125.7 284.0,124.8 284.5,124.6 285.0,125.7 285.5,124.2 286.0,125.1 286.5,124.9 287.0,123.9 287.5,125.1 288.0,125.2 288.5,124.7 289.0,124.8 289.5,124.9 290.0,123.7 290.5,124.3 291.0,124.2 291.5,124.7 292.0,124.6 292.5,124.5 293.0,124.1 293.5,124.5 294.0,124.1 294.5,124.1 295.0,123.2 295.5,122.8 296.0,123.0 296.5,123.3 297.0,122.8 297.5,124.0 298.0,123.4 298.5,123.5 299.0,123.5 299.5,123.5 300.0,123.1 300.5,122.2 301.0,123.5 301.5,123.4 302.0,122.9 302.5,122.9 303.0,123.0 303.5,122.0 304.0,123.1 304.5,122.2 305.0,121.8 305.5,122.1 306.0,122.8 306.5,121.9 307.0,122.7 307.5,123.1 308.0,122.2 308.5,121.9 309.0,122.1 309.5,122.4 310.0,122.4 310.5,122.1 311.0,122.1 311.5,121.1 312.0,121.1 312.5,121.3 313.0,122.1 313.5,121.2 314.0,121.6 314.5,120.6 315.0,120.6 315.5,120.9 316.0,121.6 316.5,121.6 317.0,121.5 317.5,120.8 318.0,121.1 318.5,121.0 319.0,120.9 319.5,120.2 320.0,121.6 320.5,120.2 321.0,121.6 321.5,121.5 322.0,119.7 322.5,120.5 323.0,121.1 323.5,121.3 324.0,120.3 324.5,119.9 325.0,119.8 325.5,121.1 326.0,119.6 326.5,120.3 327.0,119.4 327.5,120.1 328.0,120.8 328.5,119.2 329.0,120.4 329.5,119.8 330.0,120.5 330.5,120.1 331.0,119.1 331.5,120.3 332.0,119.5 332.5,118.6 333.0,118.5 333.5,119.3 334.0,119.2 334.5,118.9 335.0,118.5 335.5,118.8 336.0,118.7 336.5,119.7 337.0,118.0 337.5,119.4 338.0,119.5 338.5,118.1 339.0,119.6 339.5,119.1 340.0,119.4 340.5,118.2 341.0,118.3 341.5,118.3 342.0,119.4 342.5,118.5 343.0,118.0 343.5,118.1 344.0,117.8 344.5,117.3 345.0,117.3 345.5,118.7 346.0,117.6 346.5,118.8 347.0,117.4 347.5,117.4 348.0,117.8 348.5,117.1 349.0,117.4 349.5,118.5 350.0,118.3 350.5,118.1 351.0,117.7 351.5,118.2 352.0,118.2 352.5,117.4 353.0,117.7 353.5,116.3 354.0,117.6 354.5,117.0 355.0,117.5 355.5,117.2 356.0,116.5 356.5,116.0 357.0,117.6 357.5,116.0 358.0,116.6 358.5,116.3 359.0,116.2 359.5,117.0 360.0,117.4 360.5,115.9 361.0,116.7 361.5,115.9 362.0,116.4 362.5,116.0 363.0,115.5 363.5,115.4 364.0,115.5 364.5,116.8 365.0,115.9 365.5,115.3 366.0,116.7 366.5,116.8 367.0,115.6 367.5,115.0 368.0,115.0 368.5,114.7 369.0,115.2 369.5,114.6 370.0,114.9 370.5,114.9 371.0,115.5 371.5,116.1 372.0,115.7 372.5,115.0 373.0,114.9 373.5,115.1 374.0,114.7 374.5,114.6 375.0,114.0 375.5,114.4 376.0,115.8 376.5,114.0 377.0,114.7 377.5,114.9 378.0,115.3 378.5,113.9 379.0,114.0 379.5,113.9 380.0,114.2 380.5,114.2 381.0,115.2 381.5,115.0 382.0,115.0 382.5,113.1 383.0,113.1 383.5,114.5 384.0,114.8 384.5,113.9 385.0,114.0 385.5,112.7 386.0,113.5 386.5,114.6 387.0,114.3 387.5,114.4 388.0,114.6 388.5,113.0 389.0,112.6 389.5,112.7 390.0,113.4 390.5,113.7 391.0,114.2 391.5,113.7 392.0,113.5 392.5,113.7 393.0,112.9 393.5,113.1 394.0,111.9 394.5,113.5 395.0,112.2 395.5,113.7 396.0,113.0 396.5,112.2 397.0,111.8 397.5,112.0 398.0,112.8 398.5,112.9 399.0,111.6 399.5,111.4 400.0,112.4 400.5,112.5 401.0,112.0 401.5,111.6 402.0,112.3 402.5,111.0 403.0,111.6 403.5,111.9 404.0,112.9 404.5,112.2 405.0,112.7 405.5,111.7 406.0,111.1 406.5,111.1 407.0,112.6 407.5,112.0 408.0,111.1 408.5,110.4 409.0,111.4 409.5,111.7 410.0,111.1 410.5,110.7 411.0,111.6 411.5,112.1 412.0,110.5 412.5,110.0 413.0,110.6 413.5,110.8 414.0,111.3 414.5,110.2 415.0,111.5 415.5,111.3 416.0,110.7 416.5,110.0 417.0,111.7 417.5,110.1 418.0,111.2 418.5,109.8 419.0,109.8 419.5,111.0 420.0,109.8 420.5,111.3 421.0,110.2 421.5,109.4 422.0,109.5 422.5,109.9 423.0,110.4 423.5,111.0 424.0,109.1 424.5,109.6 425.0,109.1 425.5,110.9 426.0,108.9 426.5,108.6 427.0,108.6 427.5,109.3 428.0,110.4 428.5,110.4 429.0,110.0 429.5,110.5 430.0,110.3 430.5,108.9 431.0,108.5 431.5,110.2 432.0,109.7 432.5,108.0 433.0,109.4 433.5,108.7 434.0,108.6 434.5,108.5 435.0,108.0 435.5,107.6 436.0,108.2 436.5,108.3 437.0,109.7 437.5,107.7 438.0,109.6 438.5,107.8 439.0,108.1 439.5,109.2 440.0,109.1 440.5,108.1 441.0,107.2 441.5,108.1 442.0,107.8 442.5,109.1 443.0,107.3 443.5,107.7 444.0,108.9 444.5,106.8 445.0,107.6 445.5,108.6 446.0,108.4 446.5,106.6 447.0,106.5 447.5,106.6 448.0,108.6 448.5,106.9 449.0,108.1 449.5,108.4 450.0,107.0 450.5,106.8 451.0,108.4 451.5,107.5 452.0,106.6 452.5,107.7 453.0,106.6 453.5,106.5 454.0,105.8 454.5,107.6 455.0,107.9 455.5,107.2 456.0,107.9 456.5,105.6 457.0,106.0 457.5,106.6 458.0,107.7 458.5,107.7 459.0,106.2 459.5,105.8 460.0,106.2 460.5,106.3 461.0,107.4 461.5,105.5 462.0,107.0 462.5,106.8 463.0,106.9 463.5,106.8 464.0,106.3 464.5,105.6 465.0,105.5 465.5,105.5 466.0,106.5 466.5,104.7 467.0,105.0 467.5,106.3 468.0,105.0 468.5,104.5 469.0,104.4 469.5,105.6 470.0,105.0 470.5,106.6 471.0,106.3 471.5,106.6 472.0,104.7 472.5,104.2 473.0,104.2 473.5,105.1 474.0,105.6 474.5,104.9 475.0,104.3 475.5,104.7 476.0,105.2 476.5,105.3 477.0,105.4 477.5,105.6 478.0,105.1 478.5,103.7 479.0,105.5 479.5,104.0 480.0,104.7 480.5,104.1 481.0,105.0 481.5,103.6 482.0,103.7 482.5,103.6 483.0,103.3 483.5,105.2 484.0,104.3 484.5,103.6 485.0,103.8 485.5,105.3 486.0,104.0 486.5,103.2 487.0,104.7 487.5,104.2 488.0,105.0 488.5,102.7 489.0,103.6 489.5,104.5 490.0,104.5 490.5,104.6 491.0,102.3 491.5,102.9 492.0,102.4 492.5,102.5 493.0,104.5 493.5,103.5 494.0,104.3 494.5,102.8 495.0,104.1 495.5,102.9 496.0,102.4 496.5,103.7 497.0,104.1 497.5,101.8 498.0,103.1 498.5,103.1 499.0,102.0 499.5,102.4 500.0,101.7 500.5,101.8 501.0,101.9 501.5,102.8 502.0,102.9 502.5,101.6 503.0,101.1 503.5,101.9 504.0,102.8 504.5,101.4 505.0,101.7 505.5,101.4 506.0,102.9 506.5,102.2 507.0,100.8 507.5,100.9 508.0,101.6 508.5,102.0 509.0,102.2 509.5,100.7 510.0,100.8 510.5,102.2 511.0,101.4 511.5,128.3 512.0,101.0 512.5,102.7 513.0,101.0 513.5,101.6 514.0,101.0 514.5,101.1 515.0,102.3 515.5,102.6 516.0,100.8 516.5,100.3 517.0,101.7 517.5,100.2 518.0,99.7 518.5,102.1 519.0,100.7 519.5,101.8 520.0,100.6 520.5,101.8 521.0,100.6 521.5,99.8 522.0,99.3 522.5,100.8 523.0,101.0 523.5,101.7 524.0,99.3 524.5,100.8 525.0,100.0 525.5,100.4 526.0,99.3 526.5,99.6 527.0,100.3"/>
<rect x="529" y="204" width="4" height="1" fill="#0000ff"/>
<rect x="529" y="202" width="2" height="1" fill="#0000a0"/>
<rect x="529" y="199" width="2" height="1" fill="#0000a0"/>
<rect x="529" y="197" width="2" height="1" fill="#0000a0"/>
<rect x="529" y="194" width="2" height="1" fill="#0000a0"/>
<rect x="529" y="192" width="2" height="1" fill="#0000a0"/>
<rect x="529" y="189" width="2" height="1" fill="#0000a0"/>
<rect x="529" y="187" width="2" height="1" fill="#0000a0"/>
<rect x="529" y="184" width="4" height="1" fill="#0000ff"/>
<rect x="529" y="182" width="2" height="1" fill="#0000a0"/>
<rect x="529" y="179" width="2" height="1" fill="#0000a0"/>
<rect x="529" y="177" width="2" height="1" fill="#0000a0"/>
<rect x="529" y="174" width="2" height="1" fill="#0000a0"/>
<rect x="529" y="172" width="2" height="1" fill="#0000a0"/>
<rect x="529" y="169" width="2" height="1" fill="#0000a0"/>
<rect x="529" y="167" width="2" height="1" fill="#0000a0"/>
<rect x="529" y="164" width="4" height="1" fill="#0000ff"/>
<rect x="529" y="162" width="2" height="1" fill="#0000a0"/>
<rect x="529" y="159" width="2" height="1" fill="#0000a0"/>
<rect x="529" y="157" width="2" height="1" fill="#0000a0"/>
<rect x="529" y="154" width="2" height="1" fill="#0000a0"/>
<rect x="529" y="152" width="2" height="1" fill="#0000a0"/>
<rect x="529" y="149" width="2" height="1" fill="#0000a0"/>
<rect x="529" y="147" width="2" height="1" fill="#0000a0"/>
<rect x="529" y="144" width="4" height="1" fill="#0000ff"/>
<rect x="529" y="142" width="2" height="1" fill="#0000a0"/>
<rect x="529" y="139" width="2" height="1" fill="#0000a0"/>
<rect x="529" y="137" width="2" height="1" fill="#0000a0"/>
<rect x="529" y="134" width="2" height="1" fill="#0000a0"/>
<rect x="529" y="132" width="2" height="1" fill="#0000a0"/>
<rect x="529" y="129" width="2" height="1" fill="#0000a0"/>
<rect x="529" y="127" width="2" height="1" fill="#0000a0"/>
<rect x="529" y="124" width="4" height="1" fill="#0000ff"/>
<rect x="529" y="122" width="2" height="1" fill="#0000a0"/>
<rect x="529" y="119" width="2" height="1" fill="#0000a0"/>
<rect x="529" y="117" width="2" height="1" fill="#0000a0"/>
<rect x="529" y="114" width="2" height="1" fill="#0000a0"/>
<rect x="529" y="112" width="2" height="1" fill="#0000a0"/>
<rect x="529" y="109" width="2" height="1" fill="#0000a0"/>
<rect x="529" y="107" width="2" height="1" fill="#0000a0"/>
<rect x="529" y="104" width="4" height="1" fill="#0000ff"/>
<rect x="529" y="102" width="2" height="1" fill="#0000a0"/>
<rect x="529" y="99" width="2" height="1" fill="#0000a0"/>
<rect x="529" y="97" width="2" height="1" fill="#0000a0"/>
<rect x="529" y="94" width="2" height="1" fill="#0000a0"/>
<rect x="529" y="92" width="2" height="1" fill="#0000a0"/>
<rect x="529" y="89" width="2" height="1" fill="#0000a0"/>
<rect x="529" y="87" width="2" height="1" fill="#0000a0"/>
<rect x="529" y="84" width="4" height="1" fill="#0000ff"/>
<rect x="529" y="82" width="2" height="1" fill="#0000a0"/>
<rect x="529" y="79" width="2" height="1" fill="#0000a0"/>
<rect x="529" y="77" width="2" height="1" fill="#0000a0"/>
<rect x="529" y="74" width="2" height="1" fill="#0000a0"/>
<rect x="62" y="205" width="1" height="1" fill="#0000ff"/>
<rect x="73" y="205" width="1" height="1" fill="#0000ff"/>
<rect x="85" y="205" width="1" height="1" fill="#0000ff"/>
<rect x="97" y="205" width="1" height="1" fill="#0000ff"/>
<rect x="108" y="205" width="1" height="1" fill="#0000ff"/>
<rect x="120" y="205" width="1" height="1" fill="#0000ff"/>
<rect x="132" y="205" width="1" height="1" fill="#0000ff"/>
<rect x="143" y="205" width="1" height="1" fill="#0000ff"/>
<rect x="155" y="205" width="1" height="1" fill="#0000ff"/>
<rect x="167" y="205" width="1" height="1" fill="#0000ff"/>
<rect x="178" y="205" width="1" height="1" fill="#0000ff"/>
<rect x="190" y="205" width="1" height="1" fill="#0000ff"/>
<rect x="202" y="205" width="1" height="1" fill="#0000ff"/>
<rect x="213" y="205" width="1" height="1" fill="#0000ff"/>
<rect x="225" y="205" width="1" height="1" fill="#0000ff"/>
<rect x="237" y="205" width="1" height="1" fill="#0000ff"/>
<rect x="248" y="205" width="1" height="1" fill="#0000ff"/>
<rect x="260" y="205" width="1" height="1" fill="#0000ff"/>
<rect x="272" y="205" width="1" height="1" fill="#0000ff"/>
<rect x="283" y="205" width="1" height="1" fill="#0000ff"/>
<rect x="295" y="205" width="1" height="1" fill="#0000ff"/>
<rect x="307" y="205" width="1" height="1" fill="#0000ff"/>
<rect x="318" y="205" width="1" height="1" fill="#0000ff"/>
<rect x="330" y="205" width="1" height="1" fill="#0000ff"/>
<rect x="342" y="205" width="1" height="1" fill="#0000ff"/>
<rect x="353" y="205" width="1" height="1" fill="#0000ff"/>
<rect x="365" y="205" width="1" height="1" fill="#0000ff"/>
<rect x="377" y="205" width="1" height="1" fill="#0000ff"/>
<rect x="388" y="205" width="1" height="1" fill="#0000ff"/>
<rect x="400" y="205" width="1" height="1" fill="#0000ff"/>
<rect x="412" y="205" width="1" height="1" fill="#0000ff"/>
<rect x="423" y="205" width="1" height="1" fill="#0000ff"/>
<rect x="435" y="205" width="1" height="1" fill="#0000ff"/>
<rect x="447" y="205" width="1" height="1" fill="#0000ff"/>
<rect x="458" y="205" width="1" height="1" fill="#0000ff"/>
<rect x="470" y="205" width="1" height="1" fill="#0000ff"/>
<rect x="482" y="205" width="1" height="1" fill="#0000ff"/>
<rect x="493" y="205" width="1" height="1" fill="#0000ff"/>
<rect x="505" y="205" width="1" height="1" fill="#0000ff"/>
<rect x="517" y="205" width="1" height="1" fill="#0000ff"/>
<rect x="529" y="205" width="1" height="1" fill="#0000ff"/>
<rect x="61" y="222" width="470" height="134" fill="#000"/>
<rect x="73" y="223" width="1" height="132" fill="#0000c0"/>
<rect x="85" y="223" width="1" height="132" fill="#0000c0"/>
<rect x="97" y="223" width="1" height="132" fill="#0000c0"/>
<rect x="108" y="223" width="1" height="132" fill="#0000c0"/>
<rect x="120" y="223" width="1" height="132" fill="#0000ff"/>
<rect x="132" y="223" width="1" height="132" fill="#0000c0"/>
<rect x="143" y="223" width="1" height="132" fill="#0000c0"/>
<rect x="155" y="223" width="1" height="132" fill="#0000c0"/>
<rect x="167" y="223" width="1" height="132" fill="#0000c0"/>
<rect x="178" y="223" width="1" height="132" fill="#0000ff"/>
<rect x="190" y="223" width="1" height="132" fill="#0000c0"/>
<rect x="202" y="223" width="1" height="132" fill="#0000c0"/>
<rect x="213" y="223" width="1" height="132" fill="#0000c0"/>
<rect x="225" y="223" width="1" height="132" fill="#0000c0"/>
<rect x="237" y="223" width="1" height="132" fill="#0000ff"/>
<rect x="248" y="223" width="1" height="132" fill="#0000c0"/>
<rect x="260" y="223" width="1" height="132" fill="#0000c0"/>
<rect x="272" y="223" width="1" height="132" fill="#0000c0"/>
<rect x="283" y="223" width="1" height="132" fill="#0000c0"/>
<rect x="295" y="223" width="1" height="132" fill="#0000ff"/>
<rect x="307" y="223" width="1" height="132" fill="#0000c0"/>
<rect x="318" y="223" width="1" height="132" fill="#0000c0"/>
<rect x="330" y="223" width="1" height="132" fill="#0000c0"/>
<rect x="342" y="223" width="1" height="132" fill="#0000c0"/>
<rect x="353" y="223" width="1" height="132" fill="#0000ff"/>
<rect x="365" y="223" width="1" height="132" fill="#0000c0"/>
<rect x="377" y="223" width="1" height="132" fill="#0000c0"/>
<rect x="388" y="223" width="1" height="132" fill="#0000c0"/>
<rect x="400" y="223" width="1" height="132" fill="#0000c0"/>
<rect x="412" y="223" width="1" height="132" fill="#0000ff"/>
<rect x="423" y="223" width="1" height="132" fill="#0000c0"/>
<rect x="435" y="223" width="1" height="132" fill="#0000c0"/>
<rect x="447" y="223" width="1" height="132" fill="#0000c0"/>
<rect x="458" y="223" width="1" height="132" fill="#0000c0"/>
<rect x="470" y="223" width="1" height="132" fill="#0000ff"/>
<rect x="482" y="223" width="1" height="132" fill="#0000c0"/>
<rect x="493" y="223" width="1" height="132" fill="#0000c0"/>
<rect x="505" y="223" width="1" height="132" fill="#0000c0"/>
<rect x="517" y="223" width="1" height="132" fill="#0000c0"/>
<rect x="59" y="354" width="469" height="1" fill="#0000ff"/>
<rect x="60" y="341" width="468" height="1" fill="#0000c0"/>
<rect x="59" y="328" width="469" height="1" fill="#0000ff"/>
<rect x="60" y="315" width="468" height="1" fill="#0000c0"/>
<rect x="59" y="302" width="469" height="1" fill="#0000ff"/>
<rect x="60" y="289" width="468" height="1" fill="#0000c0"/>
<rect x="59" y="276" width="469" height="1" fill="#0000ff"/>
<rect x="60" y="263" width="468" height="1" fill="#0000c0"/>
<rect x="59" y="250" width="469" height="1" fill="#0000ff"/>
<rect x="60" y="237" width="468" height="1" fill="#0000c0"/>
<rect x="59" y="223" width="469" height="1" fill="#0000ff"/>
<polyline fill="none" stroke="#ff10ff" stroke-width="1.15" points="62.5,355.0 62.5,307.3 63.0,306.4 64.0,307.2 65.0,309.2 66.0,306.8 67.0,306.1 68.0,307.1 69.0,304.9 70.0,304.8 71.0,305.5 72.0,307.2 73.0,304.3 74.0,306.0 75.0,309.0 76.0,305.2 77.0,308.6 78.0,308.5 79.0,305.8 80.0,305.1 81.0,306.7 82.0,305.7 83.0,305.6 84.0,308.9 85.0,306.6 86.0,306.2 87.0,308.2 88.0,306.1 89.0,307.4 90.0,300.6 91.0,301.0 92.0,299.1 93.0,300.8 94.0,301.3 95.0,303.0 96.0,301.9 97.0,298.7 98.0,300.5 99.0,299.8 100.0,299.9 101.0,302.7 102.0,301.6 103.0,301.5 104.0,299.8 105.0,302.2 106.0,301.7 107.0,301.8 108.0,302.2 109.0,301.3 110.0,300.9 111.0,302.1 112.0,302.0 113.0,300.9 114.0,298.9 115.0,300.8 116.0,302.4 117.0,300.4 118.0,299.8 119.0,300.5 120.0,300.6 121.0,301.5 122.0,300.8 123.0,302.4 124.0,300.5 125.0,299.3 126.0,300.6 127.0,299.3 128.0,300.1 129.0,300.8 130.0,302.5 131.0,299.7 132.0,300.6 133.0,303.3 134.0,298.9 135.0,299.4 136.0,299.2 137.0,299.0 138.0,301.1 139.0,300.7 140.0,301.8 141.0,299.6 142.0,301.2 143.0,298.4 144.0,301.8 145.0,299.9 146.0,299.2 147.0,300.6 148.0,301.2 149.0,302.3 150.0,299.4 151.0,299.6 152.0,298.8 153.0,301.4 154.0,298.8 155.0,300.1 156.0,299.9 157.0,300.3 158.0,301.5 159.0,301.2 160.0,299.6 161.0,301.2 162.0,300.7 163.0,300.7 164.0,300.4 165.0,299.3 166.0,301.8 167.0,300.5 168.0,304.5 169.0,303.9 170.0,304.7 171.0,305.8 172.0,304.4 173.0,305.7 174.0,302.1 175.0,305.6 176.0,304.6 177.0,303.6 178.0,304.5 179.0,302.3 180.0,304.1 181.0,305.8 182.0,302.7 183.0,304.4 184.0,300.3 185.0,305.1 186.0,304.6 187.0,303.9 188.0,305.4 189.0,303.2 190.0,302.2 191.0,301.9 192.0,303.4 193.0,304.1 194.0,302.3 195.0,302.4 196.0,304.2 197.0,304.6 198.0,305.0 199.0,303.7 200.0,304.1 201.0,303.0 202.0,302.7 203.0,305.4 204.0,303.4 205.0,303.5 206.0,304.5 207.0,303.8 208.0,302.3 209.0,304.0 210.0,304.1 211.0,304.4 212.0,303.6 213.0,300.7 214.0,299.4 215.0,301.6 216.0,301.0 217.0,299.6 218.0,298.5 219.0,305.4 220.0,304.6 221.0,303.9 222.0,305.1 223.0,304.4 224.0,304.3 225.0,306.3 226.0,306.6 227.0,304.5 228.0,306.0 229.0,304.7 230.0,304.5 231.0,305.7 232.0,306.0 233.0,305.8 234.0,303.3 235.0,307.5 236.0,303.7 237.0,304.2 238.0,304.9 239.0,303.6 240.0,304.0 241.0,304.9 242.0,303.8 243.0,303.4 244.0,302.9 245.0,303.2 246.0,303.4 247.0,305.9 248.0,303.9 249.0,302.3 250.0,302.1 251.0,303.8 252.0,303.5 253.0,303.9 254.0,304.1 255.0,301.8 256.0,301.2 257.0,302.2 258.0,301.6 259.0,300.2 260.0,303.2 261.0,301.7 262.0,301.7 263.0,300.3 264.0,303.1 265.0,303.3 266.0,300.7 267.0,301.9 268.0,300.7 269.0,300.2 270.0,300.2 271.0,299.6 272.0,300.3 273.0,300.5 274.0,302.3 275.0,299.2 276.0,301.8 277.0,300.2 278.0,298.4 279.0,301.9 280.0,298.9 281.0,300.6 282.0,299.7 283.0,304.8 284.0,305.3 285.0,302.2 286.0,300.2 287.0,301.8 288.0,302.7 289.0,302.6 290.0,300.7 291.0,300.8 292.0,292.9 293.0,303.9 294.0,300.5 295.0,303.2 296.0,301.9 297.0,301.3 298.0,303.7 299.0,303.4 300.0,304.5 301.0,301.4 302.0,302.9 303.0,301.7 304.0,304.4 305.0,301.9 306.0,303.8 307.0,303.0 308.0,304.4 309.0,303.1 310.0,302.0 311.0,303.1 312.0,303.1 313.0,302.2 314.0,303.1 315.0,302.2 316.0,302.7 317.0,301.7 318.0,303.2 319.0,302.6 320.0,300.3 321.0,298.7 322.0,300.0 323.0,301.8 324.0,302.0 325.0,300.6 326.0,301.0 327.0,301.5 328.0,301.2 329.0,299.6 330.0,302.6 331.0,300.2 332.0,300.8 333.0,298.7 334.0,302.6 335.0,300.0 336.0,300.7 337.0,300.4 338.0,299.9 339.0,298.2 340.0,300.0 341.0,299.9 342.0,302.2 343.0,299.7 344.0,302.1 345.0,300.7 346.0,300.0 347.0,298.8 348.0,299.3 349.0,300.2 350.0,299.5 351.0,300.8 352.0,300.4 353.0,300.6 354.0,299.5 355.0,300.8 356.0,301.7 357.0,301.9 358.0,297.6 359.0,303.0 360.0,300.6 361.0,300.8 362.0,300.7 363.0,301.7 364.0,299.8 365.0,300.4 366.0,301.7 367.0,301.0 368.0,302.0 369.0,300.0 370.0,298.1 371.0,298.6 372.0,299.3 373.0,300.5 374.0,300.5 375.0,299.9 376.0,296.2 377.0,298.1 378.0,298.2 379.0,289.0 380.0,289.0 381.0,297.9 382.0,298.9 383.0,299.3 384.0,298.1 385.0,297.7 386.0,299.0 387.0,297.2 388.0,298.5 389.0,297.7 390.0,296.3 391.0,298.8 392.0,298.2 393.0,298.5 394.0,298.6 395.0,297.7 396.0,300.0 397.0,297.8 398.0,299.9 399.0,298.9 400.0,297.2 401.0,300.2 402.0,296.6 403.0,295.9 404.0,296.8 405.0,297.3 406.0,298.0 407.0,298.4 408.0,295.5 409.0,299.4 410.0,298.2 411.0,297.5 412.0,298.8 413.0,299.7 414.0,297.8 415.0,298.1 416.0,300.3 417.0,298.9 418.0,299.1 419.0,298.5 420.0,297.5 421.0,297.2 422.0,299.7 423.0,298.2 424.0,298.9 425.0,304.7 426.0,302.0 427.0,303.3 428.0,303.1 429.0,305.3 430.0,302.1 431.0,302.7 432.0,301.9 433.0,303.4 434.0,300.9 435.0,302.4 436.0,303.4 437.0,302.2 438.0,302.0 439.0,303.5 440.0,301.4 441.0,302.2 442.0,301.8 443.0,301.5 444.0,299.6 445.0,302.8 446.0,303.3 447.0,302.2 448.0,302.9 449.0,305.4 450.0,300.4 451.0,302.2 452.0,304.7 453.0,303.5 454.0,302.4 455.0,301.2 456.0,301.2 457.0,300.5 458.0,299.6 459.0,299.6 460.0,300.5 461.0,300.3 462.0,302.6 463.0,302.6 464.0,300.8 465.0,301.5 466.0,300.6 467.0,301.8 468.0,301.6 469.0,300.9 470.0,303.5 471.0,302.3 472.0,300.1 473.0,300.8 474.0,302.1 475.0,300.5 476.0,298.8 477.0,299.2 478.0,302.3 479.0,301.5 480.0,303.1 481.0,301.6 482.0,302.4 483.0,301.8 484.0,300.5 485.0,301.2 486.0,301.2 487.0,302.7 488.0,299.7 489.0,301.2 490.0,302.5 491.0,300.8 492.0,299.5 493.0,302.5 494.0,300.3 495.0,302.4 496.0,299.8 497.0,300.1 498.0,301.1 499.0,301.1 500.0,300.7 501.0,299.1 502.0,296.2 503.0,295.9 504.0,295.3 505.0,295.1 506.0,293.7 507.0,292.0 508.0,294.3 509.0,291.7 510.0,291.0 511.0,292.2 512.0,291.3 513.0,290.7 514.0,291.6 515.0,291.5 516.0,291.6 517.0,290.9 518.0,289.6 519.0,288.4 520.0,289.3 521.0,289.3 522.0,289.7 523.0,288.4 524.0,288.8 525.0,286.9 526.0,287.9 527.0,286.7"/>
<rect x="528" y="223" width="1" height="132" fill="#c8c8c8"/>
<rect x="62" y="355" width="1" height="1" fill="#0000ff"/>
<rect x="73" y="355" width="1" height="1" fill="#0000ff"/>
<rect x="85" y="355" width="1" height="1" fill="#0000ff"/>
<rect x="97" y="355" width="1" height="1" fill="#0000ff"/>
<rect x="108" y="355" width="1" height="1" fill="#0000ff"/>
<rect x="120" y="355" width="1" height="1" fill="#0000ff"/>
<rect x="132" y="355" width="1" height="1" fill="#0000ff"/>
<rect x="143" y="355" width="1" height="1" fill="#0000ff"/>
<rect x="155" y="355" width="1" height="1" fill="#0000ff"/>
<rect x="167" y="355" width="1" height="1" fill="#0000ff"/>
<rect x="178" y="355" width="1" height="1" fill="#0000ff"/>
<rect x="190" y="355" width="1" height="1" fill="#0000ff"/>
<rect x="202" y="355" width="1" height="1" fill="#0000ff"/>
<rect x="213" y="355" width="1" height="1" fill="#0000ff"/>
<rect x="225" y="355" width="1" height="1" fill="#0000ff"/>
<rect x="237" y="355" width="1" height="1" fill="#0000ff"/>
<rect x="248" y="355" width="1" height="1" fill="#0000ff"/>
<rect x="260" y="355" width="1" height="1" fill="#0000ff"/>
<rect x="272" y="355" width="1" height="1" fill="#0000ff"/>
<rect x="283" y="355" width="1" height="1" fill="#0000ff"/>
<rect x="295" y="355" width="1" height="1" fill="#0000ff"/>
<rect x="307" y="355" width="1" height="1" fill="#0000ff"/>
<rect x="318" y="355" width="1" height="1" fill="#0000ff"/>
<rect x="330" y="355" width="1" height="1" fill="#0000ff"/>
<rect x="342" y="355" width="1" height="1" fill="#0000ff"/>
<rect x="353" y="355" width="1" height="1" fill="#0000ff"/>
<rect x="365" y="355" width="1" height="1" fill="#0000ff"/>
<rect x="377" y="355" width="1" height="1" fill="#0000ff"/>
<rect x="388" y="355" width="1" height="1" fill="#0000ff"/>
<rect x="400" y="355" width="1" height="1" fill="#0000ff"/>
<rect x="412" y="355" width="1" height="1" fill="#0000ff"/>
<rect x="423" y="355" width="1" height="1" fill="#0000ff"/>
<rect x="435" y="355" width="1" height="1" fill="#0000ff"/>
<rect x="447" y="355" width="1" height="1" fill="#0000ff"/>
<rect x="458" y="355" width="1" height="1" fill="#0000ff"/>
<rect x="470" y="355" width="1" height="1" fill="#0000ff"/>
<rect x="482" y="355" width="1" height="1" fill="#0000ff"/>
<rect x="493" y="355" width="1" height="1" fill="#0000ff"/>
<rect x="505" y="355" width="1" height="1" fill="#0000ff"/>
<rect x="517" y="355" width="1" height="1" fill="#0000ff"/>
<rect x="529" y="355" width="1" height="1" fill="#0000ff"/>
</svg>
<div class="btn" style="left:562px;top:59px;width:68px;"></div>
<div class="btn" style="left:654px;top:59px;width:68px;border-color:#1444a0;box-shadow:inset 0 0 0 1px #3a62b4;"></div>
<div style="left:655px;top:61px;width:65px;height:15px;border:1px dotted #000;border-radius:2px;"></div>

<div class="gb" style="left:561px;top:88px;width:162px;height:69px;"></div>
<div style="left:567px;top:84px;width:62px;height:10px;background:#fcfcfd;"></div>






<div class="gb" style="left:561px;top:161px;width:162px;height:179px;"></div>
<div style="left:567px;top:157px;width:46px;height:10px;background:#fcfcfd;"></div>


<div class="edit" style="left:631px;top:170px;width:82px;height:20px;"></div>

<div style="left:696px;top:172px;width:16px;height:16px;border:1px solid #a8a8c0;border-radius:2px;background:linear-gradient(to bottom,#f8f8fc,#c8c8dc);"></div>
<svg style="position:absolute;left:696px;top:172px" width="16" height="16" viewBox="0 0 16 16"><path d="M4.5 6.5L8 10L11.5 6.5" fill="none" stroke="#222" stroke-width="2"/></svg>

<div class="edit" style="left:631px;top:194px;width:70px;height:18px;"></div>

<div class="edit" style="left:631px;top:217px;width:70px;height:18px;"></div>

<div class="cb" style="left:569px;top:242px;"></div>
<div class="cb ck" style="left:569px;top:261px;"></div>
<div class="cb ck" style="left:569px;top:276px;"></div>
<div class="cb ck" style="left:569px;top:291px;"></div>
<div class="cb ck" style="left:569px;top:306px;"></div>
<div class="cb ck" style="left:569px;top:321px;"></div>
<svg style="position:absolute;left:569px;top:261px" width="13" height="73" viewBox="0 0 13 73"><g fill="none" stroke="#21a121" stroke-width="2"><path d="M3 6l2.5 2.5L10 4"/><path d="M3 21l2.5 2.5L10 19"/><path d="M3 36l2.5 2.5L10 34"/><path d="M3 51l2.5 2.5L10 49"/><path d="M3 66l2.5 2.5L10 64"/></g></svg>

<div class="gb" style="left:561px;top:345px;width:162px;height:23px;"></div>


<div class="gb" style="left:561px;top:374px;width:162px;height:63px;"></div>




<div class="gbe" style="left:18px;top:374px;width:170px;height:63px;"></div>
<div class="gt" style="left:28px;top:372px;width:55px;height:8px;"></div>
<div class="sq" style="left:28px;top:371px;background:#00ffff;"></div>
<div class="gbe" style="left:198px;top:374px;width:170px;height:63px;"></div>
<div class="gt" style="left:208px;top:372px;width:54px;height:8px;"></div>
<div class="sq" style="left:208px;top:371px;background:#fbbe32;"></div>
<div class="gbe" style="left:379px;top:374px;width:170px;height:47px;"></div>
<div class="gt" style="left:389px;top:372px;width:41px;height:8px;"></div>
<div class="sq" style="left:389px;top:371px;background:#ff00ff;"></div>

<div id="tx">
<div style="left:6.23px;top:6.00px;font-size:12px;line-height:20px;transform-origin:0 0;transform:scaleX(1.1359);color:#000;font-weight:bold;">CD</div>
<div style="left:30.58px;top:6.00px;font-size:12px;line-height:20px;transform-origin:0 0;transform:scaleX(1.1097);color:#000;font-weight:bold;">Speed</div>
<div style="left:74.42px;top:6.00px;font-size:12px;line-height:20px;transform-origin:0 0;transform:scaleX(1.3143);color:#000;font-weight:bold;">:</div>
<div style="left:83.40px;top:6.00px;font-size:12px;line-height:20px;transform-origin:0 0;transform:scaleX(1.0639);color:#000;font-weight:bold;">Disc</div>
<div style="left:116.45px;top:6.00px;font-size:12px;line-height:20px;transform-origin:0 0;transform:scaleX(1.0966);color:#000;font-weight:bold;">Quality</div>
<div style="left:168.55px;top:6.00px;font-size:12px;line-height:20px;transform-origin:0 0;transform:scaleX(1.1617);color:#000;font-weight:bold;">Test</div>
<div style="left:201.52px;top:6.00px;font-size:12px;line-height:20px;transform-origin:0 0;transform:scaleX(2.5667);color:#000;font-weight:bold;">-</div>
<div style="left:216.05px;top:6.00px;font-size:12px;line-height:20px;transform-origin:0 0;transform:scaleX(1.0007);color:#000;font-weight:bold;">BENQ</div>
<div style="left:272.01px;top:6.00px;font-size:12px;line-height:20px;transform-origin:0 0;transform:scaleX(1.0528);color:#000;font-weight:bold;">DVD</div>
<div style="left:304.27px;top:6.00px;font-size:12px;line-height:20px;transform-origin:0 0;transform:scaleX(0.9798);color:#000;font-weight:bold;">DD</div>
<div style="left:326.78px;top:6.00px;font-size:12px;line-height:20px;transform-origin:0 0;transform:scaleX(1.0901);color:#000;font-weight:bold;">DW1620</div>
<div style="left:399.57px;top:6.00px;font-size:12px;line-height:20px;transform-origin:0 0;transform:scaleX(1.1022);color:#000;font-weight:bold;">B7T9</div>
<div style="left:21.28px;top:35.00px;font-size:12px;line-height:20px;transform-origin:0 0;transform:scaleX(0.9227);color:#000;">Disc</div>
<div style="left:47.00px;top:35.00px;font-size:12px;line-height:20px;transform-origin:0 0;transform:scaleX(0.9932);color:#000;">Quality</div>
<div style="left:271.78px;top:54.00px;font-size:12px;line-height:20px;transform-origin:0 0;transform:scaleX(0.9548);color:#000;">recorded</div>
<div style="left:320.20px;top:54.00px;font-size:12px;line-height:20px;transform-origin:0 0;transform:scaleX(1.0085);color:#000;">with</div>
<div style="left:346.10px;top:54.00px;font-size:12px;line-height:20px;transform-origin:0 0;transform:scaleX(0.8985);color:#000;">BENQ</div>
<div style="left:393.22px;top:54.00px;font-size:12px;line-height:20px;transform-origin:0 0;transform:scaleX(0.9811);color:#000;">DVD</div>
<div style="left:421.05px;top:54.00px;font-size:12px;line-height:20px;transform-origin:0 0;transform:scaleX(0.9524);color:#000;">DD</div>
<div style="left:441.11px;top:54.00px;font-size:12px;line-height:20px;transform-origin:0 0;transform:scaleX(0.8906);color:#000;">DW1620</div>
<div style="left:498.00px;top:54.00px;font-size:12px;line-height:20px;transform-origin:0 0;transform:scaleX(0.9319);color:#000;">vB7T9</div>
<div style="left:42.24px;top:63.00px;font-size:12px;line-height:20px;transform-origin:0 0;transform:scaleX(0.9131);color:#000;">50</div>
<div style="left:42.48px;top:90.00px;font-size:12px;line-height:20px;transform-origin:0 0;transform:scaleX(0.8950);color:#000;">40</div>
<div style="left:42.24px;top:116.00px;font-size:12px;line-height:20px;transform-origin:0 0;transform:scaleX(0.9131);color:#000;">30</div>
<div style="left:42.12px;top:142.00px;font-size:12px;line-height:20px;transform-origin:0 0;transform:scaleX(0.9224);color:#000;">20</div>
<div style="left:41.88px;top:168.00px;font-size:12px;line-height:20px;transform-origin:0 0;transform:scaleX(0.9417);color:#000;">10</div>
<div style="left:532.77px;top:174.00px;font-size:12px;line-height:20px;transform-origin:0 0;transform:scaleX(0.8533);color:#000;">8</div>
<div style="left:532.39px;top:154.00px;font-size:12px;line-height:20px;transform-origin:0 0;transform:scaleX(0.9250);color:#000;">16</div>
<div style="left:532.64px;top:134.00px;font-size:12px;line-height:20px;transform-origin:0 0;transform:scaleX(0.8970);color:#000;">24</div>
<div style="left:532.75px;top:114.00px;font-size:12px;line-height:20px;transform-origin:0 0;transform:scaleX(0.9061);color:#000;">32</div>
<div style="left:532.98px;top:94.00px;font-size:12px;line-height:20px;transform-origin:0 0;transform:scaleX(0.8792);color:#000;">40</div>
<div style="left:532.98px;top:74.00px;font-size:12px;line-height:20px;transform-origin:0 0;transform:scaleX(0.8792);color:#000;">48</div>
<div style="left:64.35px;top:203.00px;font-size:12px;line-height:20px;transform-origin:0 0;transform:scaleX(0.9043);color:#000;">0</div>
<div style="left:117.39px;top:203.00px;font-size:12px;line-height:20px;transform-origin:0 0;transform:scaleX(0.9250);color:#000;">10</div>
<div style="left:175.63px;top:203.00px;font-size:12px;line-height:20px;transform-origin:0 0;transform:scaleX(0.9061);color:#000;">20</div>
<div style="left:234.75px;top:203.00px;font-size:12px;line-height:20px;transform-origin:0 0;transform:scaleX(0.8970);color:#000;">30</div>
<div style="left:292.98px;top:203.00px;font-size:12px;line-height:20px;transform-origin:0 0;transform:scaleX(0.8792);color:#000;">40</div>
<div style="left:350.75px;top:203.00px;font-size:12px;line-height:20px;transform-origin:0 0;transform:scaleX(0.8970);color:#000;">50</div>
<div style="left:409.63px;top:203.00px;font-size:12px;line-height:20px;transform-origin:0 0;transform:scaleX(0.9061);color:#000;">60</div>
<div style="left:467.63px;top:203.00px;font-size:12px;line-height:20px;transform-origin:0 0;transform:scaleX(0.9061);color:#000;">70</div>
<div style="left:526.75px;top:203.00px;font-size:12px;line-height:20px;transform-origin:0 0;transform:scaleX(0.8970);color:#000;">80</div>
<div style="left:64.35px;top:353.00px;font-size:12px;line-height:20px;transform-origin:0 0;transform:scaleX(0.9043);color:#000;">0</div>
<div style="left:117.39px;top:353.00px;font-size:12px;line-height:20px;transform-origin:0 0;transform:scaleX(0.9250);color:#000;">10</div>
<div style="left:175.63px;top:353.00px;font-size:12px;line-height:20px;transform-origin:0 0;transform:scaleX(0.9061);color:#000;">20</div>
<div style="left:234.75px;top:353.00px;font-size:12px;line-height:20px;transform-origin:0 0;transform:scaleX(0.8970);color:#000;">30</div>
<div style="left:292.98px;top:353.00px;font-size:12px;line-height:20px;transform-origin:0 0;transform:scaleX(0.8792);color:#000;">40</div>
<div style="left:350.75px;top:353.00px;font-size:12px;line-height:20px;transform-origin:0 0;transform:scaleX(0.8970);color:#000;">50</div>
<div style="left:409.63px;top:353.00px;font-size:12px;line-height:20px;transform-origin:0 0;transform:scaleX(0.9061);color:#000;">60</div>
<div style="left:467.63px;top:353.00px;font-size:12px;line-height:20px;transform-origin:0 0;transform:scaleX(0.9061);color:#000;">70</div>
<div style="left:526.75px;top:353.00px;font-size:12px;line-height:20px;transform-origin:0 0;transform:scaleX(0.8970);color:#000;">80</div>
<div style="left:42.20px;top:213.00px;font-size:12px;line-height:20px;transform-origin:0 0;transform:scaleX(0.9167);color:#000;">10</div>
<div style="left:48.56px;top:240.00px;font-size:12px;line-height:20px;transform-origin:0 0;transform:scaleX(0.8889);color:#000;">8</div>
<div style="left:48.43px;top:266.00px;font-size:12px;line-height:20px;transform-origin:0 0;transform:scaleX(0.9091);color:#000;">6</div>
<div style="left:48.80px;top:292.00px;font-size:12px;line-height:20px;transform-origin:0 0;transform:scaleX(0.8163);color:#000;">4</div>
<div style="left:48.43px;top:318.00px;font-size:12px;line-height:20px;transform-origin:0 0;transform:scaleX(0.9091);color:#000;">2</div>
<div style="left:533.00px;top:318.00px;font-size:12px;line-height:20px;transform-origin:0 0;transform:scaleX(0.7837);color:#000;">4</div>
<div style="left:532.77px;top:292.00px;font-size:12px;line-height:20px;transform-origin:0 0;transform:scaleX(0.8533);color:#000;">8</div>
<div style="left:532.17px;top:266.00px;font-size:12px;line-height:20px;transform-origin:0 0;transform:scaleX(0.9516);color:#000;">12</div>
<div style="left:532.18px;top:240.00px;font-size:12px;line-height:20px;transform-origin:0 0;transform:scaleX(0.9417);color:#000;">16</div>
<div style="left:532.42px;top:213.00px;font-size:12px;line-height:20px;transform-origin:0 0;transform:scaleX(0.9224);color:#000;">20</div>
<div style="left:582.66px;top:58.53px;font-size:12px;line-height:20px;transform-origin:0 0;transform:scaleX(1.0157);color:#000;">開始</div>
<div style="left:667.38px;top:58.42px;font-size:12px;line-height:20px;transform-origin:0 0;transform:scaleX(1.0451);color:#000;">終了</div>
<div style="left:692.73px;top:58.30px;font-size:12px;line-height:20px;transform-origin:0 0;transform:scaleX(0.8960);color:#000;">(</div>
<div style="left:697.01px;top:58.30px;font-size:12px;line-height:20px;transform-origin:0 0;transform:scaleX(0.7467);color:#000;text-decoration:underline;">X</div>
<div style="left:703.70px;top:58.30px;font-size:12px;line-height:20px;transform-origin:0 0;transform:scaleX(0.8320);color:#000;">)</div>
<div style="left:568.65px;top:78.50px;font-size:12px;line-height:20px;transform-origin:0 0;transform:scaleX(0.7508);color:#0a35a0;">ディスク</div>
<div style="left:604.22px;top:78.12px;font-size:12px;line-height:20px;transform-origin:0 0;transform:scaleX(0.9696);color:#0a35a0;">情報</div>
<div style="left:567.57px;top:91.10px;font-size:12px;line-height:20px;transform-origin:0 0;transform:scaleX(0.6949);color:#000;">タイプ</div>
<div style="left:592.30px;top:91.00px;font-size:12px;line-height:20px;transform-origin:0 0;transform:scaleX(1.7778);color:#000;">:</div>
<div style="left:616.46px;top:91.00px;font-size:12px;line-height:20px;transform-origin:0 0;transform:scaleX(0.9354);color:#00007b;">Data</div>
<div style="left:644.41px;top:91.00px;font-size:12px;line-height:20px;transform-origin:0 0;transform:scaleX(0.9426);color:#00007b;">CD</div>
<div style="left:567.84px;top:106.00px;font-size:12px;line-height:20px;transform-origin:0 0;transform:scaleX(0.9448);color:#000;">ID:</div>
<div style="left:616.10px;top:106.00px;font-size:12px;line-height:20px;transform-origin:0 0;transform:scaleX(0.9333);color:#00007b;">unknown</div>
<div style="left:566.46px;top:121.12px;font-size:12px;line-height:20px;transform-origin:0 0;transform:scaleX(1.0556);color:#000;">日付</div>
<div style="left:590.50px;top:121.00px;font-size:12px;line-height:20px;transform-origin:0 0;transform:scaleX(1.7778);color:#000;">:</div>
<div style="left:616.55px;top:121.00px;font-size:12px;line-height:20px;transform-origin:0 0;transform:scaleX(0.9067);color:#00007b;">3</div>
<div style="left:627.80px;top:121.00px;font-size:12px;line-height:20px;transform-origin:0 0;transform:scaleX(0.9548);color:#00007b;">April</div>
<div style="left:654.43px;top:121.00px;font-size:12px;line-height:20px;transform-origin:0 0;transform:scaleX(0.9054);color:#00007b;">2005</div>
<div style="left:568.09px;top:136.00px;font-size:12px;line-height:20px;transform-origin:0 0;transform:scaleX(0.9143);color:#000;">Label:</div>
<div style="left:616.25px;top:136.00px;font-size:12px;line-height:20px;transform-origin:0 0;transform:scaleX(0.8749);color:#00007b;">CDS_TEST_A2</div>
<div style="left:569.11px;top:151.00px;font-size:12px;line-height:20px;transform-origin:0 0;transform:scaleX(0.9812);color:#0a35a0;">Settings</div>
<div style="left:568.27px;top:169.50px;font-size:12px;line-height:20px;transform-origin:0 0;transform:scaleX(1.0065);color:#000;">転送速度</div>
<div style="left:633.51px;top:170.00px;font-size:12px;line-height:20px;transform-origin:0 0;transform:scaleX(1.0489);color:#000;">最大</div>
<div style="left:567.74px;top:195.12px;font-size:12px;line-height:20px;transform-origin:0 0;transform:scaleX(1.0337);color:#000;">開始</div>
<div style="left:633.17px;top:194.00px;font-size:12px;line-height:20px;transform-origin:0 0;transform:scaleX(0.8656);color:#000;">00:00.00</div>
<div style="left:568.40px;top:217.12px;font-size:12px;line-height:20px;transform-origin:0 0;transform:scaleX(0.9984);color:#000;">終了位置</div>
<div style="left:633.06px;top:217.00px;font-size:12px;line-height:20px;transform-origin:0 0;transform:scaleX(0.8656);color:#000;">79:57.74</div>
<div style="left:584.52px;top:239.00px;font-size:12px;line-height:20px;transform-origin:0 0;transform:scaleX(0.9563);color:#000;">Quick Scan</div>
<div style="left:584.53px;top:258.00px;font-size:12px;line-height:20px;transform-origin:0 0;transform:scaleX(0.9449);color:#000;">Show C1/PIE</div>
<div style="left:584.52px;top:273.00px;font-size:12px;line-height:20px;transform-origin:0 0;transform:scaleX(0.9534);color:#000;">Show C2/PIF</div>
<div style="left:584.51px;top:288.00px;font-size:12px;line-height:20px;transform-origin:0 0;transform:scaleX(0.9808);color:#000;">Show Jitter</div>
<div style="left:584.54px;top:303.00px;font-size:12px;line-height:20px;transform-origin:0 0;transform:scaleX(0.9234);color:#000;">Show Read Speed</div>
<div style="left:584.53px;top:318.00px;font-size:12px;line-height:20px;transform-origin:0 0;transform:scaleX(0.9328);color:#000;">Show Write Speed</div>
<div style="left:567.61px;top:346.50px;font-size:12px;line-height:20px;transform-origin:0 0;transform:scaleX(1.0331);color:#000;">品質</div>
<div style="left:591.62px;top:346.75px;font-size:12px;line-height:20px;transform-origin:0 0;transform:scaleX(0.7015);color:#000;">スコア</div>
<div style="left:615.80px;top:346.50px;font-size:12px;line-height:20px;transform-origin:0 0;transform:scaleX(1.7778);color:#000;">:</div>
<div style="left:694.80px;top:346.50px;font-size:12px;line-height:20px;transform-origin:0 0;transform:scaleX(0.9000);color:#00007b;">94</div>
<div style="left:568.16px;top:378.50px;font-size:12px;line-height:20px;transform-origin:0 0;transform:scaleX(0.9914);color:#000;">進行状況</div>
<div style="left:614.20px;top:379.00px;font-size:12px;line-height:20px;transform-origin:0 0;transform:scaleX(1.7778);color:#000;">:</div>
<div style="left:678.03px;top:379.00px;font-size:12px;line-height:20px;transform-origin:0 0;transform:scaleX(0.8824);color:#00007b;">100 %</div>
<div style="left:568.07px;top:397.75px;font-size:12px;line-height:20px;transform-origin:0 0;transform:scaleX(0.7338);color:#000;">ポジション</div>
<div style="left:610.40px;top:397.50px;font-size:12px;line-height:20px;transform-origin:0 0;transform:scaleX(1.7778);color:#000;">:</div>
<div style="left:666.76px;top:397.50px;font-size:12px;line-height:20px;transform-origin:0 0;transform:scaleX(0.8592);color:#00007b;">79:55.00</div>
<div style="left:568.16px;top:415.50px;font-size:12px;line-height:20px;transform-origin:0 0;transform:scaleX(0.9877);color:#000;">速度</div>
<div style="left:590.30px;top:416.00px;font-size:12px;line-height:20px;transform-origin:0 0;transform:scaleX(1.7778);color:#000;">:</div>
<div style="left:670.37px;top:416.00px;font-size:12px;line-height:20px;transform-origin:0 0;transform:scaleX(0.9150);color:#00007b;">41.77 X</div>
<div style="left:39.23px;top:364.00px;font-size:12px;line-height:20px;transform-origin:0 0;transform:scaleX(0.9054);color:#000;">CD</div>
<div style="left:54.33px;top:363.50px;font-size:12px;line-height:20px;transform-origin:0 0;transform:scaleX(0.7733);color:#000;">エラー</div>
<div style="left:219.19px;top:364.00px;font-size:12px;line-height:20px;transform-origin:0 0;transform:scaleX(0.9699);color:#000;">C2</div>
<div style="left:233.33px;top:363.50px;font-size:12px;line-height:20px;transform-origin:0 0;transform:scaleX(0.7704);color:#000;">エラー</div>
<div style="left:402.25px;top:364.00px;font-size:12px;line-height:20px;transform-origin:0 0;transform:scaleX(0.9922);color:#000;">Jitter</div>
<div style="left:26.37px;top:379.12px;font-size:12px;line-height:20px;transform-origin:0 0;transform:scaleX(1.0101);color:#000;">平均</div>
<div style="left:48.60px;top:379.00px;font-size:12px;line-height:20px;transform-origin:0 0;transform:scaleX(1.7778);color:#000;">:</div>
<div style="left:26.25px;top:397.00px;font-size:12px;line-height:20px;transform-origin:0 0;transform:scaleX(1.0044);color:#000;">最大</div>
<div style="left:48.60px;top:397.00px;font-size:12px;line-height:20px;transform-origin:0 0;transform:scaleX(1.7778);color:#000;">:</div>
<div style="left:26.38px;top:415.12px;font-size:12px;line-height:20px;transform-origin:0 0;transform:scaleX(0.9934);color:#000;">合計</div>
<div style="left:53.60px;top:415.00px;font-size:12px;line-height:20px;transform-origin:0 0;transform:scaleX(1.7778);color:#000;">:</div>
<div style="left:208.37px;top:379.12px;font-size:12px;line-height:20px;transform-origin:0 0;transform:scaleX(1.0101);color:#000;">平均</div>
<div style="left:230.60px;top:379.00px;font-size:12px;line-height:20px;transform-origin:0 0;transform:scaleX(1.7778);color:#000;">:</div>
<div style="left:208.25px;top:397.00px;font-size:12px;line-height:20px;transform-origin:0 0;transform:scaleX(1.0044);color:#000;">最大</div>
<div style="left:230.60px;top:397.00px;font-size:12px;line-height:20px;transform-origin:0 0;transform:scaleX(1.7778);color:#000;">:</div>
<div style="left:208.38px;top:415.12px;font-size:12px;line-height:20px;transform-origin:0 0;transform:scaleX(0.9934);color:#000;">合計</div>
<div style="left:235.60px;top:415.00px;font-size:12px;line-height:20px;transform-origin:0 0;transform:scaleX(1.7778);color:#000;">:</div>
<div style="left:388.37px;top:379.12px;font-size:12px;line-height:20px;transform-origin:0 0;transform:scaleX(1.0101);color:#000;">平均</div>
<div style="left:410.60px;top:379.00px;font-size:12px;line-height:20px;transform-origin:0 0;transform:scaleX(1.7778);color:#000;">:</div>
<div style="left:388.25px;top:397.00px;font-size:12px;line-height:20px;transform-origin:0 0;transform:scaleX(1.0044);color:#000;">最大</div>
<div style="left:410.60px;top:397.00px;font-size:12px;line-height:20px;transform-origin:0 0;transform:scaleX(1.7778);color:#000;">:</div>
<div style="left:154.81px;top:379.00px;font-size:12px;line-height:20px;transform-origin:0 0;transform:scaleX(0.9000);color:#00007b;">5.48</div>
<div style="left:162.30px;top:397.00px;font-size:12px;line-height:20px;transform-origin:0 0;transform:scaleX(0.9000);color:#00007b;">34</div>
<div style="left:145.62px;top:415.00px;font-size:12px;line-height:20px;transform-origin:0 0;transform:scaleX(0.9000);color:#00007b;">26257</div>
<div style="left:336.41px;top:379.00px;font-size:12px;line-height:20px;transform-origin:0 0;transform:scaleX(0.9000);color:#00007b;">0.00</div>
<div style="left:350.88px;top:397.00px;font-size:12px;line-height:20px;transform-origin:0 0;transform:scaleX(0.9000);color:#00007b;">0</div>
<div style="left:350.88px;top:415.00px;font-size:12px;line-height:20px;transform-origin:0 0;transform:scaleX(0.9000);color:#00007b;">0</div>
<div style="left:504.90px;top:379.00px;font-size:12px;line-height:20px;transform-origin:0 0;transform:scaleX(0.9000);color:#00007b;">7.96 %</div>
<div style="left:504.90px;top:397.00px;font-size:12px;line-height:20px;transform-origin:0 0;transform:scaleX(0.9000);color:#00007b;">10.3 %</div>
</div>
</body>
</html>
